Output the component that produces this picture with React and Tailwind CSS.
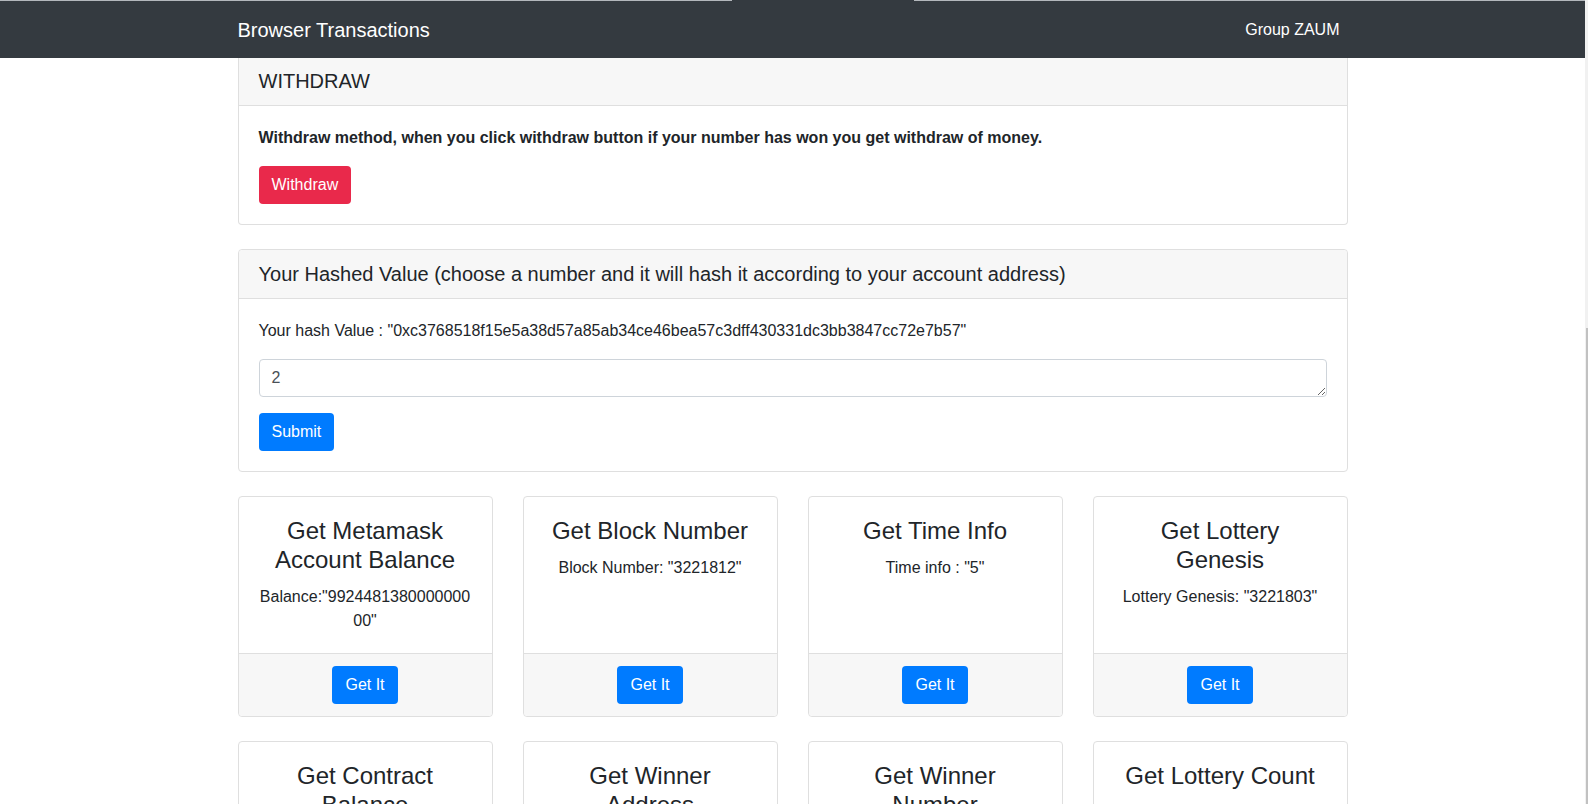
import React from "react";

const font = "font-['Liberation_Sans',Arial,Helvetica,sans-serif]";

function InfoCard({ title, text }) {
  return (
    <div className="flex flex-col rounded-[4px] border border-[#dfdfdf] bg-white">
      <div className="flex min-h-[156px] flex-1 flex-col px-5 pt-5 pb-5 text-center">
        <h4 className="mb-[10px] text-[24px] leading-[28.8px] font-normal text-[#212529]">{title}</h4>
        {text ? (
          <p className="break-words text-[16px] leading-6 text-[#212529]">{text}</p>
        ) : null}
      </div>
      <div className="rounded-b-[4px] border-t border-[#dfdfdf] bg-[#f7f7f7] px-5 py-3 text-center">
        <button className="h-[38px] rounded-[4px] bg-[#007bff] px-[13px] text-[16px] leading-6 text-white">
          Get It
        </button>
      </div>
    </div>
  );
}

export default function App() {
  const row1 = [
    { title: "Get Metamask Account Balance", text: 'Balance:"992448138000000000"' },
    { title: "Get Block Number", text: 'Block Number: "3221812"' },
    { title: "Get Time Info", text: 'Time info : "5"' },
    { title: "Get Lottery Genesis", text: 'Lottery Genesis: "3221803"' },
  ];
  const row2 = [
    { title: "Get Contract Balance" },
    { title: "Get Winner Address" },
    { title: "Get Winner Number" },
    { title: "Get Lottery Count" },
  ];

  return (
    <div className={`${font} flex h-[804px] w-[1588px] overflow-hidden bg-white text-[#212529]`}>
      <div className="flex min-w-0 flex-1 flex-col">
        {/* top hairline */}
        <div className="flex h-px shrink-0">
          <div className="w-[732px] bg-[#b3b7bc]" />
          <div className="w-[182px] bg-[#343a40]" />
          <div className="flex-1 bg-[#b3b7bc]" />
        </div>
        {/* navbar */}
        <nav className="h-[57px] shrink-0 bg-[#343a40] pt-[9px] pb-2">
          <div className="mx-auto flex h-10 w-[1110px] items-center justify-between">
            <span className="text-[20px] leading-[30px] text-white">Browser Transactions</span>
            <span className="px-2 text-[16px] leading-6 text-white">Group ZAUM</span>
          </div>
        </nav>

        <div className="mx-auto flex w-[1110px] flex-col">
          {/* Withdraw card */}
          <div className="rounded-b-[4px] border border-t-0 border-[#dfdfdf]">
            <div className="border-b border-[#dfdfdf] bg-[#f7f7f7] px-5 pt-[11px] pb-3">
              <h5 className="text-[20px] leading-6 font-normal">WITHDRAW</h5>
            </div>
            <div className="p-5">
              <p className="mb-4 text-[16px] leading-6 font-bold">
                Withdraw method, when you click withdraw button if your number has won you get withdraw of money.
              </p>
              <button className="h-[38px] rounded-[4px] bg-[#e9294b] px-[13px] text-[16px] leading-6 text-white">
                Withdraw
              </button>
            </div>
          </div>

          {/* Hash card */}
          <div className="mt-6 rounded-[4px] border border-[#dfdfdf]">
            <div className="rounded-t-[4px] border-b border-[#dfdfdf] bg-[#f7f7f7] px-5 py-3">
              <h5 className="text-[20px] leading-6 font-normal">
                Your Hashed Value (choose a number and it will hash it according to your account address)
              </h5>
            </div>
            <div className="p-5">
              <p className="mb-4 text-[16px] leading-6">
                Your hash Value : "0xc3768518f15e5a38d57a85ab34ce46bea57c3dff430331dc3bb3847cc72e7b57"
              </p>
              <textarea
                rows={1}
                defaultValue="2"
                className="mb-4 block h-[38px] w-full rounded-[4px] border border-[#ced4da] px-3 py-[6px] text-[16px] leading-6 text-[#495057] outline-none"
              />
              <button className="h-[38px] rounded-[4px] bg-[#007bff] px-[13px] text-[16px] leading-6 text-white">
                Submit
              </button>
            </div>
          </div>

          {/* Card grid */}
          <div className="mt-6 grid grid-cols-4 gap-x-[30px]">
            {row1.map((c) => (
              <InfoCard key={c.title} title={c.title} text={c.text} />
            ))}
          </div>
          <div className="mt-6 grid grid-cols-4 gap-x-[30px]">
            {row2.map((c) => (
              <InfoCard key={c.title} title={c.title} />
            ))}
          </div>
        </div>
      </div>
      {/* scrollbar strip */}
      <div className="flex w-[3px] shrink-0 flex-col bg-[#f1f1f1] pt-[328px]">
        <div className="ml-px w-[2px] flex-1 bg-[#c1c1c1]" />
      </div>
    </div>
  );
}
